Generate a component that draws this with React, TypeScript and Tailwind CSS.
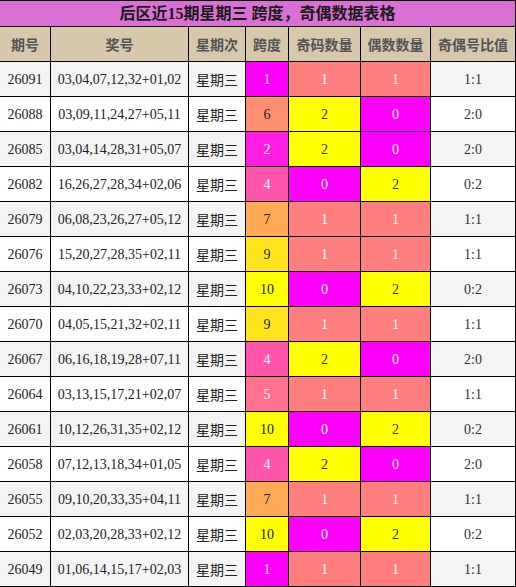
const rows = [
  ["26091", "03,04,07,12,32+01,02", 1, 1, 1],
  ["26088", "03,09,11,24,27+05,11", 6, 2, 0],
  ["26085", "03,04,14,28,31+05,07", 2, 2, 0],
  ["26082", "16,26,27,28,34+02,06", 4, 0, 2],
  ["26079", "06,08,23,26,27+05,12", 7, 1, 1],
  ["26076", "15,20,27,28,35+02,11", 9, 1, 1],
  ["26073", "04,10,22,23,33+02,12", 10, 0, 2],
  ["26070", "04,05,15,21,32+02,11", 9, 1, 1],
  ["26067", "06,16,18,19,28+07,11", 4, 2, 0],
  ["26064", "03,13,15,17,21+02,07", 5, 1, 1],
  ["26061", "10,12,26,31,35+02,12", 10, 0, 2],
  ["26058", "07,12,13,18,34+01,05", 4, 2, 0],
  ["26055", "09,10,20,33,35+04,11", 7, 1, 1],
  ["26052", "02,03,20,28,33+02,12", 10, 0, 2],
  ["26049", "01,06,14,15,17+02,03", 1, 1, 1],
] as const

// span colour runs from magenta (1) to yellow (10)
function spanColor(v: number) {
  const t = (v - 1) / 9
  const g = Math.round(255 * t)
  const b = Math.round(255 * (1 - t))
  return `rgb(255,${g},${b})`
}

function countClass(n: number) {
  if (n === 2) return "bg-[#ffff00] text-[#333]"
  if (n === 0) return "bg-[#ff00ff] text-white"
  return "bg-[#ff7f7f] text-white"
}

const headers = ["期号", "奖号", "星期次", "跨度", "奇码数量", "偶数数量", "奇偶号比值"]
const cell = "border-r border-b border-black p-0 text-center"

export default function App() {
  return (
    <div className="w-[516px] h-[587px] overflow-hidden bg-white">
      <table
        className="w-[516px] table-fixed border-separate border-spacing-0 text-[14px] text-[#222]"
        style={{ fontFamily: '"Liberation Serif", "Noto Sans CJK SC", serif' }}
      >
        <colgroup>
          <col className="w-[51px]" />
          <col className="w-[138px]" />
          <col className="w-[57px]" />
          <col className="w-[43px]" />
          <col className="w-[72px]" />
          <col className="w-[70px]" />
          <col className="w-[85px]" />
        </colgroup>
        <thead>
          <tr className="h-[27px]">
            <th
              colSpan={7}
              className={`${cell} border-t bg-[#da70d6] text-[16px] font-bold text-[#1a1a1a]`}
            >
              后区近15期星期三 跨度，奇偶数据表格
            </th>
          </tr>
          <tr className="h-[35px] bg-[#d7c7ab]">
            {headers.map((h) => (
              <th
                key={h}
                className={`${cell} text-[14px] font-bold text-[#555]`}
                style={{ fontFamily: '"Noto Sans CJK SC", sans-serif' }}
              >
                {h}
              </th>
            ))}
          </tr>
        </thead>
        <tbody>
          {rows.map(([id, nums, span, odd, even], i) => (
            <tr key={id} className={`h-[35px] ${i % 2 === 0 ? "bg-[#f4f4f4]" : "bg-white"}`}>
              <td className={cell}>{id}</td>
              <td className={cell}>{nums}</td>
              <td className={cell} style={{ fontFamily: '"Noto Sans CJK SC", sans-serif' }}>
                星期三
              </td>
              <td
                className={`${cell} ${span >= 6 ? "text-[#222]" : "text-white"}`}
                style={{ backgroundColor: spanColor(span) }}
              >
                {span}
              </td>
              <td className={`${cell} ${countClass(odd)}`}>{odd}</td>
              <td className={`${cell} ${countClass(even)}`}>{even}</td>
              <td className={`${cell} text-[#333]`}>
                {odd}:{even}
              </td>
            </tr>
          ))}
        </tbody>
      </table>
    </div>
  )
}
